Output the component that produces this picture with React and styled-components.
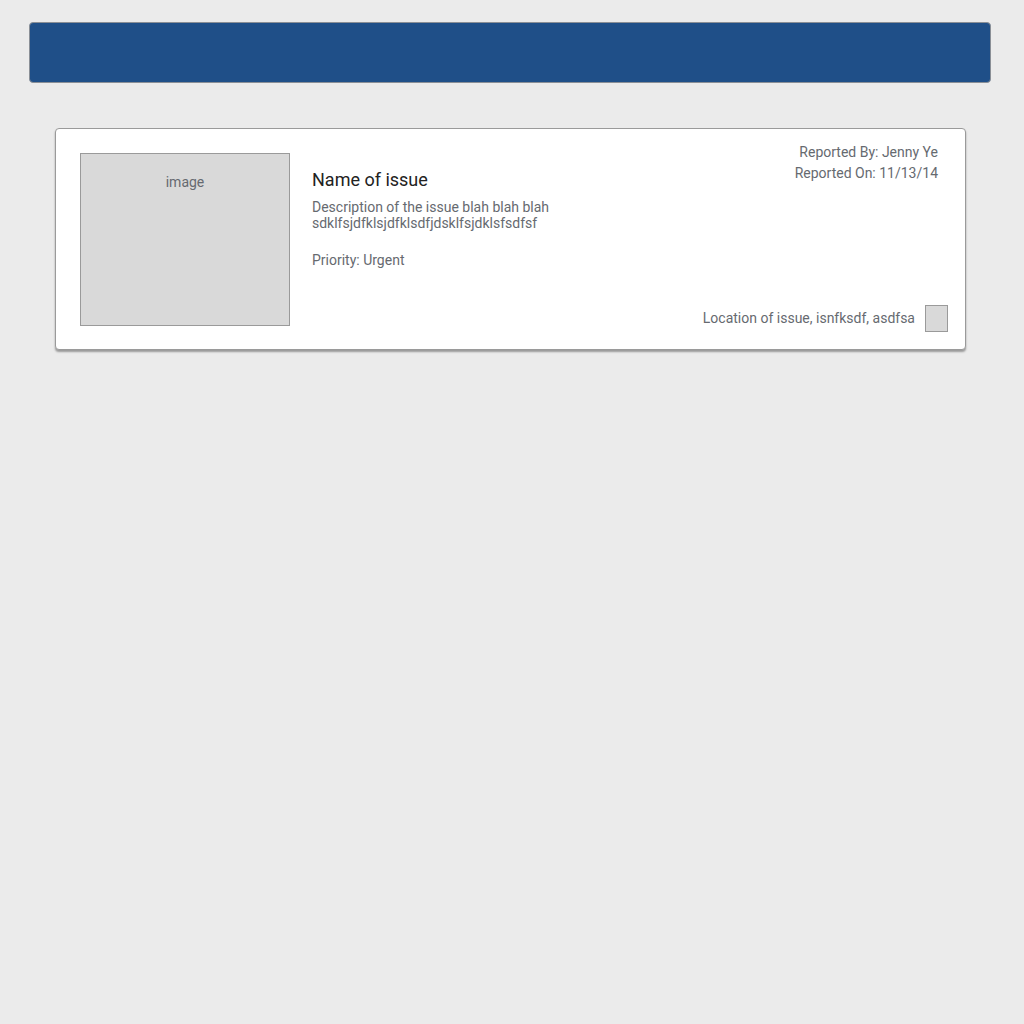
import React from 'react';
import styled, { createGlobalStyle } from 'styled-components';

const GlobalStyle = createGlobalStyle`
  html, body {
    margin: 0;
    padding: 0;
    background: #ebebeb;
    font-family: Roboto, "Liberation Sans", sans-serif;
  }
`;

const Page = styled.div`
  padding: 22px 33px 0 29px;
  min-height: 1024px;
  box-sizing: border-box;
`;

const Header = styled.header`
  height: 61px;
  background: #1f4f88;
  border: 1px solid #8a8f96;
  border-radius: 4px;
  box-sizing: border-box;
`;

const Card = styled.div`
  margin: 45px 25px 0 26px;
  background: #ffffff;
  border: 1px solid #9a9a9a;
  border-radius: 4px;
  box-shadow: 0 2px 2px rgba(0, 0, 0, 0.35);
  height: 222px;
  box-sizing: border-box;
  padding: 24px 17px 17px 24px;
  display: flex;
  gap: 22px;
`;

const ImageBox = styled.div`
  width: 210px;
  height: 173px;
  flex-shrink: 0;
  box-sizing: border-box;
  background: #d9d9d9;
  border: 1px solid #9a9a9a;
  text-align: center;
  padding-top: 20px;
  font-size: 14px;
  color: #666a70;
`;

const Main = styled.div`
  flex: 1;
  padding-top: 16px;
`;

const Title = styled.h2`
  margin: 0;
  font-size: 18px;
  font-weight: 400;
  line-height: 21px;
  color: #222222;
`;

const Text = styled.p`
  margin: ${(p) => p.$top || 0}px 0 0;
  font-size: 14px;
  line-height: 16px;
  color: #666a70;
  width: 250px;
`;

const Side = styled.div`
  display: flex;
  flex-direction: column;
  justify-content: space-between;
  align-items: flex-end;
  margin-top: -11px;
`;

const Meta = styled.div`
  text-align: right;
  font-size: 14px;
  line-height: 21px;
  color: #666a70;
  padding-right: 10px;
`;

const Location = styled.div`
  display: flex;
  align-items: center;
  gap: 10px;
  font-size: 14px;
  color: #666a70;
`;

const LocationText = styled.span`
  margin-bottom: 2px;
`;

const Thumb = styled.div`
  width: 23px;
  height: 27px;
  box-sizing: border-box;
  background: #d9d9d9;
  border: 1px solid #9a9a9a;
`;

export default function App() {
  return (
    <Page>
      <GlobalStyle />
      <Header />
      <Card>
        <ImageBox>image</ImageBox>
        <Main>
          <Title>Name of issue</Title>
          <Text $top={9}>
            Description of the issue blah blah blah sdklfsjdfklsjdfklsdfjdsklfsjdklsfsdfsf
          </Text>
          <Text $top={21}>Priority: Urgent</Text>
        </Main>
        <Side>
          <Meta>
            Reported By: Jenny Ye
            <br />
            Reported On: 11/13/14
          </Meta>
          <Location>
            <LocationText>Location of issue, isnfksdf, asdfsa</LocationText>
            <Thumb />
          </Location>
        </Side>
      </Card>
    </Page>
  );
}
